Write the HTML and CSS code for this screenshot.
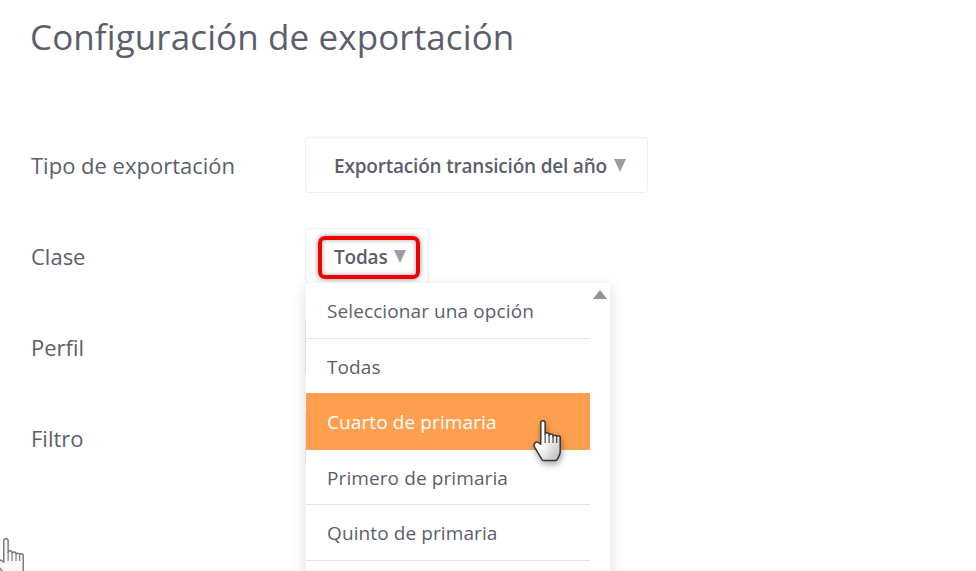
FILE: index.html
```html
<!DOCTYPE html>
<html lang="es">
<head>
  <meta charset="UTF-8">
  <title>Configuración de exportación</title>
  <link rel="stylesheet" href="styles.css">
</head>
<body>
  <h1>Configuración de exportación</h1>
  <div class="form">
    <div class="row">
      <label>Tipo de exportación</label>
      <div class="select">Exportación transición del año <span class="arrow"></span></div>
    </div>
    <div class="row">
      <label>Clase</label>
      <div class="select">Todas <span class="arrow"></span><span class="highlight"></span></div>
      <div class="dropdown">
        <ul>
          <li>Seleccionar una opción</li>
          <li>Todas</li>
          <li class="active">Cuarto de primaria</li>
          <li>Primero de primaria</li>
          <li>Quinto de primaria</li>
          <li></li>
        </ul>
        <div class="scrollbar"><span class="arrow-up"></span></div>
        <svg class="hand hand-main" viewBox="0 0 32 42" width="35" height="46">
          <defs>
            <linearGradient id="handfill" x1="0" y1="0" x2="1" y2="1">
              <stop offset="0.45" stop-color="#ffffff"/>
              <stop offset="1" stop-color="#b4b4b4"/>
            </linearGradient>
          </defs>
          <path d="M8 3.500c0-2.600 4-2.600 4 0V14c0-2 3.400-2 3.600 0v1c.2-1.800 3.400-1.800 3.600 0v1c.2-1.600 3.200-1.600 3.400 0 .1-1 3-1.200 3.200 .6V30c0 3-1.600 4.500-2.600 6.500-.4 1-.6 1.500-1.400 1.500H10.500c-1.200 0-1.500-1-2.300-2.500L2.500 26c-1.800-3 1-6 3.500-4.500L8 23z" fill="url(#handfill)" stroke="#3a3a3a" stroke-width="1.400" stroke-linejoin="round"/>
          <path d="M12 14v8M15.600 15v7M19.200 16v6M22.600 16v6" stroke="#3a3a3a" stroke-width="1" fill="none"/>
        </svg>
      </div>
    </div>
    <div class="row">
      <label>Perfil</label>
      <div class="select">&nbsp;</div>
    </div>
    <div class="row">
      <label>Filtro</label>
      <div class="select">&nbsp;</div>
    </div>
  </div>
  <svg class="hand hand-ghost" viewBox="0 0 32 42" width="35" height="46">
    <path d="M8 3.500c0-2.600 4-2.600 4 0V14c0-2 3.400-2 3.600 0v1c.2-1.800 3.400-1.800 3.600 0v1c.2-1.600 3.200-1.600 3.400 0 .1-1 3-1.200 3.200 .6V30c0 3-1.600 4.500-2.600 6.500H10.500L2.500 26c-1.800-3 1-6 3.500-4.500L8 23z" fill="#f8f8f8" stroke="#777" stroke-width="1.300" stroke-linejoin="round"/>
    <path d="M12 14v8M15.600 15v7M19.200 16v6M22.600 16v6" stroke="#777" stroke-width="1" fill="none"/>
  </svg>
</body>
</html>
```

FILE: styles.css
```css
html, body {
  height: 100%;
}
body {
  margin: 0;
  padding: 0 0 0 31px;
  background: #fff;
  color: #5c5f6b;
  font-family: "Open Sans", "Liberation Sans", sans-serif;
  overflow: hidden;
  position: relative;
}
h1 {
  margin: 0 0 0 -1px;
  padding-top: 13px;
  font-size: 35px;
  line-height: 47px;
  font-weight: 400;
  letter-spacing: 0.1px;
  color: #5c5f6b;
}
.form {
  margin-top: 77px;
  display: flex;
  flex-direction: column;
  gap: 35px;
}
.row {
  display: flex;
  align-items: center;
  position: relative;
  height: 56px;
}
label {
  width: 274px;
  flex-shrink: 0;
  font-size: 22px;
  color: #5c5f6b;
}
.select {
  position: relative;
  display: flex;
  align-items: center;
  gap: 7px;
  height: 52px;
  padding: 2px 21.500px 0 28px;
  background: #fff;
  border: 1px solid #efeff1;
  border-radius: 4px;
  font-size: 19px;
  font-weight: 600;
  letter-spacing: -0.2px;
  color: #5c5f6b;
}
.arrow {
  width: 0;
  height: 0;
  margin-top: -2px;
  border-left: 6.500px solid transparent;
  border-right: 6.500px solid transparent;
  border-top: 13px solid #9a9ea8;
}
.highlight {
  position: absolute;
  left: 12px;
  top: 7px;
  width: 94px;
  height: 35px;
  border: 4px solid #f00000;
  border-radius: 7px;
  box-shadow: 0 0 5px rgba(0, 0, 0, 0.45), inset 0 0 5px rgba(0, 0, 0, 0.35);
}
.dropdown {
  position: absolute;
  left: 275px;
  top: 55px;
  width: 304px;
  display: flex;
  background: #fff;
  box-shadow: 0 4px 14px rgba(0, 0, 0, 0.14);
  z-index: 2;
}
.dropdown ul {
  list-style: none;
  margin: 0;
  padding: 0;
  width: 284px;
}
.dropdown li {
  height: 54.500px;
  line-height: 56.500px;
  padding-left: 21px;
  border-bottom: 1px solid #e6e6e8;
  font-size: 19px;
  letter-spacing: 0.1px;
  color: #5c5f6b;
}
.dropdown li.active {
  background: #ff9f4f;
  color: #fff;
  border-bottom-color: #ff9f4f;
  box-shadow: 0 -1px 0 #ff9f4f;
}
.scrollbar {
  width: 20px;
  display: flex;
  justify-content: center;
  padding-top: 7px;
}
.arrow-up {
  width: 0;
  height: 0;
  border-left: 7px solid transparent;
  border-right: 7px solid transparent;
  border-bottom: 9px solid #8f9299;
}
.hand {
  position: absolute;
}
.hand-main {
  left: 226px;
  top: 136px;
  filter: drop-shadow(1px 3px 3px rgba(0, 0, 0, 0.35));
}
.hand-ghost {
  left: -5px;
  top: 537px;
  filter: blur(0.5px);
}
```
